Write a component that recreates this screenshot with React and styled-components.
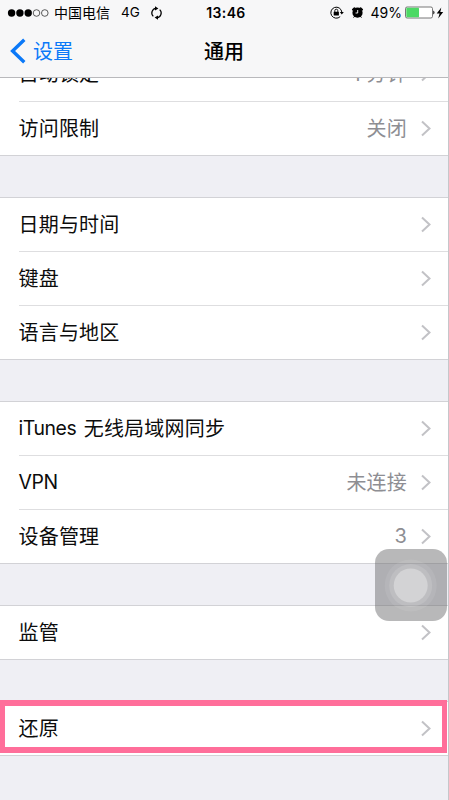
import React from 'react';
import styled, { createGlobalStyle } from 'styled-components';

const GlobalStyle = createGlobalStyle`
  * {
    box-sizing: border-box;
  }
  body {
    margin: 0;
    background: #efeff4;
    font-family: Inter, "Noto Sans CJK SC", sans-serif;
  }
`;

const Screen = styled.div`
  position: relative;
  width: 449px;
  height: 800px;
  overflow: hidden;
  background: #efeff4;
  border-right: 1px solid #c6c6ca;
`;

const Header = styled.header`
  position: relative;
  z-index: 1;
  height: 78px;
  background: #f7f7f8;
  border-bottom: 1px solid #b9b9bc;
`;

const StatusBar = styled.div`
  display: grid;
  grid-template-columns: 1fr auto 1fr;
  align-items: center;
  height: 25px;
  padding: 0 4px 0 7px;
  font-size: 13px;
  line-height: 25px;
  color: #000;
`;

const StatusSide = styled.div`
  display: flex;
  align-items: center;
  justify-content: ${(props) => (props.$right ? 'flex-end' : 'flex-start')};
  white-space: nowrap;

  svg {
    display: block;
    flex: none;
  }
`;

const Carrier = styled.span`
  margin-left: 5px;
  font-size: 14px;
`;

const Network = styled.span`
  margin: 0 10px 0 11px;
  font-size: 13.5px;
`;

const Clock = styled.span`
  padding-left: 1px;
  font-size: 14px;
  font-weight: 600;
  letter-spacing: 0.35px;
`;

const StatusIcons = styled.span`
  display: flex;
  align-items: center;
  gap: 7px;
`;

const Percent = styled.span`
  margin: 0 3px 0 7px;
  font-size: 14px;
`;

const NavBar = styled.div`
  display: grid;
  grid-template-columns: 1fr auto 1fr;
  align-items: center;
  height: 52px;
  padding: 0 10px;
`;

const BackButton = styled.a`
  display: flex;
  align-items: center;
  gap: 7px;
  font-size: 20px;
  line-height: 28px;
  color: #0b79f8;
`;

const BackLabel = styled.span`
  padding-top: 2px;
`;

const Title = styled.h1`
  margin: 0;
  padding-top: 2px;
  font-size: 20px;
  font-weight: 500;
  line-height: 28px;
  color: #000;
`;

const List = styled.main`
  display: flex;
  flex-direction: column;
  gap: 41px;
  margin-top: -33px;
`;

const Group = styled.section`
  background: #fff;
  border-bottom: 1px solid #d2d2d6;
`;

const Row = styled.div`
  position: relative;
  height: ${(props) => (props.$tall ? '56px' : '54px')};
  padding-left: 18.5px;

  ${Group} > &:first-child {
    padding-left: 0;
    border-top: 1px solid #d2d2d6;
  }
`;

const RowContent = styled.div`
  display: flex;
  align-items: center;
  height: 100%;
  padding-right: 17px;
  border-top: 1px solid #dedee0;
  font-size: 20px;
  line-height: 30px;
  letter-spacing: 0.2px;

  ${Row}:first-child > & {
    padding-left: 18.5px;
    border-top: 0;
  }
`;

const Label = styled.span`
  flex: 1;
  color: #0c0c0c;
`;

const Latin = styled.span`
  margin-right: 1.5px;
  font-size: 19.4px;
  line-height: 1;
  letter-spacing: -0.4px;
  vertical-align: 1px;
`;

const Value = styled.span`
  margin-right: 14px;
  padding-bottom: ${(props) => (props.$numeric ? '2px' : '0')};
  color: #8e8e93;
`;

const Highlight = styled.div`
  position: absolute;
  top: -2px;
  left: 0;
  width: 447px;
  height: 53px;
  border: solid #ff6e9a;
  border-width: 6px 5px;
`;

const TouchButton = styled.div`
  position: absolute;
  top: 549px;
  left: 375px;
  width: 72px;
  height: 72px;
  border-radius: 14px;
  background: rgba(100, 100, 102, 0.46);

  svg {
    display: block;
  }
`;

const groups = [
  [
    { label: '自动锁定', value: '1 分钟', tall: true },
    { label: '访问限制', value: '关闭' },
  ],
  [{ label: '日期与时间' }, { label: '键盘' }, { label: '语言与地区' }],
  [
    { latin: 'iTunes', label: ' 无线局域网同步' },
    { latin: 'VPN', label: '', value: '未连接' },
    { label: '设备管理', value: '3', numeric: true },
  ],
  [{ label: '监管' }],
  [{ label: '还原', highlighted: true }],
];

function SignalDots() {
  return (
    <svg width="42" height="10" viewBox="0 0 42 10">
      <circle cx="4.6" cy="5" r="3.7" />
      <circle cx="12.9" cy="5" r="3.7" />
      <circle cx="21.2" cy="5" r="3.7" />
      <circle cx="29.5" cy="5" r="3.3" fill="none" stroke="#333" strokeWidth="0.8" />
      <circle cx="37.8" cy="5" r="3.3" fill="none" stroke="#333" strokeWidth="0.8" />
    </svg>
  );
}

function SyncIcon() {
  return (
    <svg width="13" height="14" viewBox="0 0 13 14">
      <g fill="none" stroke="#000" strokeWidth="1.2">
        <path d="M3.3 10.4A4.7 4.7 0 0 1 6 2.3" />
        <path d="M9.7 3.6A4.7 4.7 0 0 1 7 11.7" />
      </g>
      <path d="M5 0.2L8.4 2.4L5 4.6Z" />
      <path d="M8 9.4L4.6 11.6L8 13.8Z" />
    </svg>
  );
}

function RotationLockIcon() {
  return (
    <svg width="14" height="13" viewBox="0 0 14 13">
      <path d="M10.2 10.6A5.5 5.5 0 1 1 11.8 6" fill="none" stroke="#000" strokeWidth="1" />
      <path d="M9.8 5.9H13.8L11.8 8.5Z" />
      <rect x="3.7" y="5.7" width="5.2" height="3.9" rx="0.4" />
      <path d="M4.8 6V4.7a1.5 1.5 0 0 1 3 0V6" fill="none" stroke="#000" strokeWidth="0.9" />
    </svg>
  );
}

function AlarmIcon() {
  return (
    <svg width="13" height="13" viewBox="0 0 13 13">
      <circle cx="6.5" cy="6.7" r="5.1" />
      <path d="M1.8 3.7L3.4 2.2M11.2 3.7L9.6 2.2" stroke="#000" strokeWidth="1.7" strokeLinecap="round" />
      <path d="M3.4 10.5L2.8 11.3M9.6 10.5L10.2 11.3" stroke="#000" strokeWidth="1" strokeLinecap="round" />
      <path d="M6.7 4V7H4.6" fill="none" stroke="#fff" strokeWidth="0.9" />
    </svg>
  );
}

function BatteryIcon() {
  return (
    <svg width="31" height="13" viewBox="0 0 31 13">
      <rect x="0.5" y="1" width="27" height="11" rx="1.6" fill="#fff" stroke="#555" strokeWidth="0.8" />
      <rect x="1.3" y="1.8" width="12.7" height="9.4" rx="0.7" fill="#4cd964" />
      <path d="M28.3 4.5A2.3 2.3 0 0 1 28.3 8.5Z" />
    </svg>
  );
}

function BoltIcon() {
  return (
    <svg width="8" height="12" viewBox="0 0 8 12">
      <path d="M5.3 0.6L0.7 6.6H3.6L2.2 11.4L7.2 5H4.3Z" />
    </svg>
  );
}

function BackIcon() {
  return (
    <svg width="16" height="26" viewBox="0 0 16 26">
      <path d="M14.3 1.8L2.6 13L14.3 24.2" fill="none" stroke="#0b79f8" strokeWidth="3.4" />
    </svg>
  );
}

function Chevron() {
  return (
    <svg width="10" height="17" viewBox="0 0 10 17">
      <path d="M1 1.5L8.5 8.5L1 15.5" fill="none" stroke="#c2c2c6" strokeWidth="2" />
    </svg>
  );
}

function ListRow({ latin, label, value, numeric, tall, highlighted }) {
  return (
    <Row $tall={tall}>
      <RowContent>
        <Label>
          {latin && <Latin>{latin}</Latin>}
          {label}
        </Label>
        {value && <Value $numeric={numeric}>{value}</Value>}
        <Chevron />
      </RowContent>
      {highlighted && <Highlight />}
    </Row>
  );
}

function App() {
  return (
    <>
      <GlobalStyle />
      <Screen>
        <Header>
          <StatusBar>
            <StatusSide>
              <SignalDots />
              <Carrier>中国电信</Carrier>
              <Network>4G</Network>
              <SyncIcon />
            </StatusSide>
            <Clock>13:46</Clock>
            <StatusSide $right>
              <StatusIcons>
                <RotationLockIcon />
                <AlarmIcon />
              </StatusIcons>
              <Percent>49%</Percent>
              <BatteryIcon />
              <BoltIcon />
            </StatusSide>
          </StatusBar>
          <NavBar>
            <BackButton>
              <BackIcon />
              <BackLabel>设置</BackLabel>
            </BackButton>
            <Title>通用</Title>
          </NavBar>
        </Header>
        <List>
          {groups.map((rows, i) => (
            <Group key={i}>
              {rows.map((row) => (
                <ListRow key={row.latin || row.label} {...row} />
              ))}
            </Group>
          ))}
        </List>
        <TouchButton>
          <svg width="72" height="72" viewBox="0 0 72 72">
            <circle cx="35.7" cy="36.5" r="26" fill="#fff" fillOpacity="0.08" />
            <circle cx="35.7" cy="36.5" r="21.5" fill="#fff" fillOpacity="0.12" />
            <circle cx="35.7" cy="36.5" r="17" fill="#fff" fillOpacity="0.32" />
          </svg>
        </TouchButton>
      </Screen>
    </>
  );
}

export default App;
